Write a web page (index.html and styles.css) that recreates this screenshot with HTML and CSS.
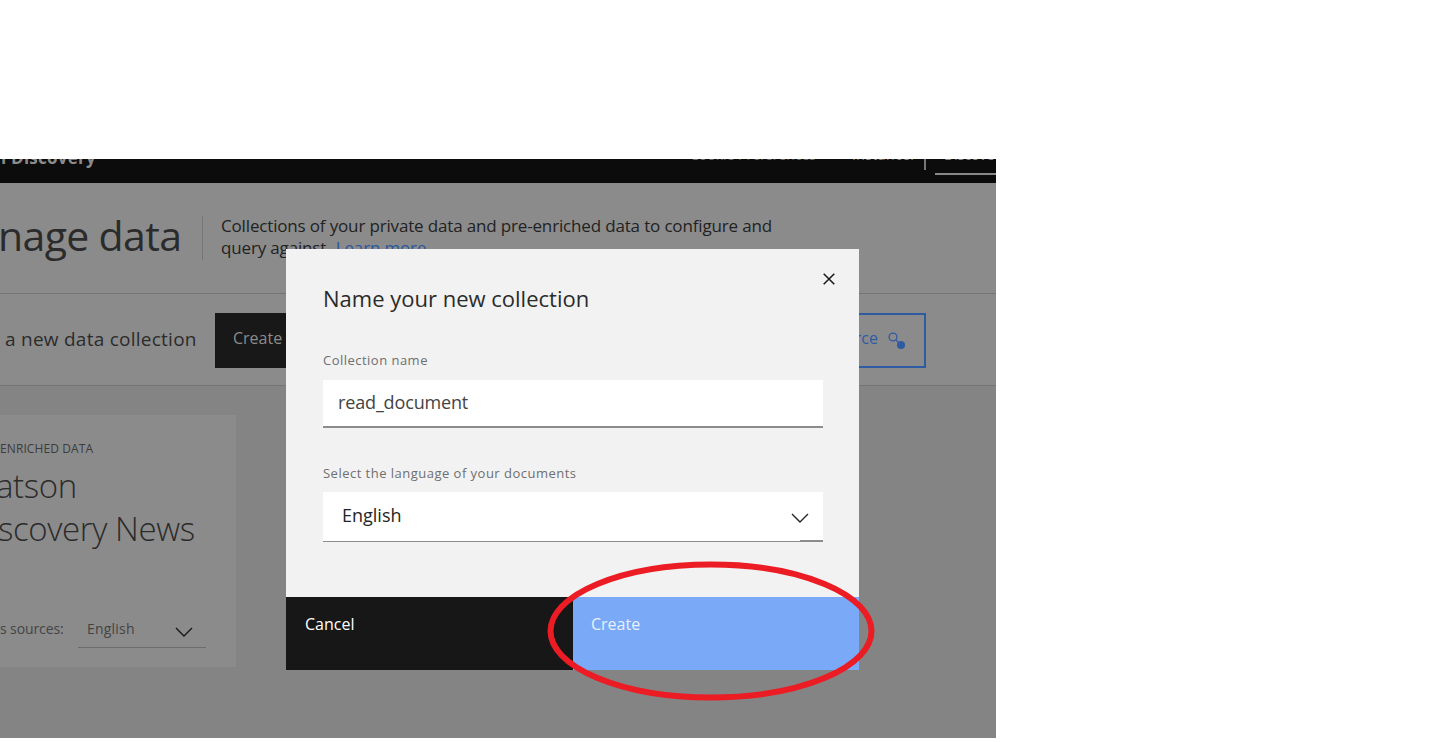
FILE: index.html
```
<!DOCTYPE html>
<html lang="en">
<head>
<meta charset="utf-8">
<title>Discovery - Manage data</title>
<link rel="stylesheet" href="styles.css">
</head>
<body>
<main class="screen">
  <header class="topbar">
    <span class="brand">n Discovery</span>
    <nav class="topnav">
      <span class="nav-cookie">Cookie Preferences</span>
      <span class="nav-instance">Instance:</span>
      <span class="nav-current">Discove</span>
    </nav>
  </header>
  <section class="hero">
    <h1 class="hero-title">nage data</h1>
    <p class="hero-text"><span class="hero-line">Collections of your private data and pre-enriched data to configure and</span><br><span class="hero-query">query against.</span> <a class="link">Learn more.</a></p>
  </section>
  <section class="actions">
    <span class="actions-label">a new data collection</span>
    <span class="btn-dark">Create</span>
    <span class="btn-outline"><span>rce</span>
      <svg class="source-icon" viewBox="0 0 18 18"><circle cx="5" cy="5" r="3.9" fill="none" stroke="currentColor" stroke-width="1.3"/><path d="M8 8l3 3" stroke="currentColor" stroke-width="1.3"/><circle cx="13" cy="13" r="4" fill="currentColor"/></svg>
    </span>
  </section>
  <section class="content">
    <article class="card">
      <p class="card-kicker">ENRICHED DATA</p>
      <h2 class="card-title"><span class="title-a">atson</span><br><span class="title-b">scovery News</span></h2>
      <div class="card-foot">
        <span class="foot-label">s sources:</span>
        <span class="mini-select"><span>English</span>
          <svg class="chevron" viewBox="0 0 18 10"><path d="M1 1l8 8 8-8" fill="none" stroke="currentColor" stroke-width="1.4"/></svg>
        </span>
      </div>
    </article>
  </section>

  <div class="modal">
    <div class="modal-body">
      <svg class="close" viewBox="0 0 12 12"><path d="M.7.7l10.6 10.6M11.3.7L.7 11.3" stroke="currentColor" stroke-width="1.5"/></svg>
      <h3 class="modal-title">Name your new collection</h3>
      <label class="label label-name">Collection name</label>
      <div class="field field-name">read_document</div>
      <label class="label label-lang">Select the language of your documents</label>
      <div class="field field-lang"><span>English</span>
        <svg class="chevron" viewBox="0 0 18 10"><path d="M1 1l8 8 8-8" fill="none" stroke="currentColor" stroke-width="1.4"/></svg>
      </div>
    </div>
    <div class="modal-actions">
      <span class="cancel">Cancel</span>
      <span class="create">Create</span>
    </div>
  </div>
  <svg class="marker" viewBox="0 0 328 140"><ellipse cx="164" cy="70" rx="160.5" ry="66.5" fill="none" stroke="#ec1c24" stroke-width="6"/></svg>
</main>
</body>
</html>
```

FILE: styles.css
```
* { box-sizing: border-box; }
body { margin: 0; background: #fff; font-family: "Open Sans", "Noto Sans", sans-serif; color: #2b2b2b; }
h1, h2, h3, p { margin: 0; font-weight: 400; }
svg { display: block; flex: none; }
span, a, label { white-space: nowrap; }
.screen { position: relative; width: 996px; height: 579px; margin-top: 159px; overflow: hidden; background: #848484; }

.topbar { display: flex; justify-content: space-between; height: 24px; background: #0c0c0c; color: #8b8b8b; overflow: hidden; }
.brand { margin: -14px 0 0 -5px; font-size: 17px; font-weight: 700; line-height: 26px; letter-spacing: .25px; }
.topnav { display: flex; font-size: 14px; line-height: 20px; }
.nav-cookie { margin-top: -14px; width: 162px; color: #6e6e6e; }
.nav-instance { width: 74px; height: 25px; margin-top: -14px; border-right: 2px solid #777; letter-spacing: .4px; }
.nav-current { width: 61px; height: 30px; margin: -14px 0 0 9px; padding-left: 9px; border-bottom: 2px solid #888; overflow: hidden; }

.hero { display: flex; height: 111px; background: #8b8b8b; border-bottom: 1px solid #757575; }
.hero-title { width: 203px; height: 44px; margin: 33px 0 0 0; border-right: 1px solid #757575; font-size: 41px; line-height: 38px; letter-spacing: -.65px; text-indent: -2px; white-space: nowrap; }
.hero-text { margin: 32px 0 0 18px; font-size: 17px; line-height: 22px; letter-spacing: -.16px; color: #222; white-space: nowrap; }
.link { margin-left: 1px; color: #2b569c; }

.actions { display: flex; align-items: flex-start; height: 92px; padding-top: 19px; background: #8b8b8b; border-bottom: 1px solid #757575; }
.actions-label { width: 210px; padding-left: 5px; font-size: 19px; line-height: 52px; letter-spacing: .25px; }
.btn-dark { width: 500px; height: 55px; margin-left: 5px; padding-left: 18px; background: #181818; color: #8b8b8b; font-size: 16px; line-height: 51px; }
.btn-outline { display: flex; justify-content: flex-end; width: 201px; height: 55px; margin-left: 10px; padding-right: 18px; border: 2px solid #2f5ba3; color: #2f5ba3; font-size: 16px; line-height: 47px; }
.source-icon { width: 18px; height: 18px; margin: 17px 0 0 10px; }

.content { padding-top: 29px; }
.card { width: 236px; height: 252px; padding-top: 24px; background: #8b8b8b; }
.card-kicker { font-size: 12px; line-height: 20px; letter-spacing: .1px; color: #3c3c3c; }
.card-title { margin: 5px 0 0 -2px; font-size: 33px; font-weight: 300; line-height: 43px; letter-spacing: -.4px; white-space: nowrap; }
.title-a { margin-left: -2px; }
.card-foot { display: flex; height: 36px; margin-top: 61px; font-size: 14px; line-height: 36px; color: #444; }
.foot-label { width: 78px; letter-spacing: -.1px; }
.mini-select { display: flex; justify-content: space-between; width: 128px; height: 37px; padding: 0 13px 0 9px; border-bottom: 1px solid #6c6c6c; letter-spacing: .2px; }
.mini-select .chevron { margin-top: 16px; color: #181818; }
.chevron { width: 18px; height: 10px; }

.modal { position: absolute; left: 286px; top: 90px; width: 573px; height: 421px; }
.modal-body { position: relative; display: flex; flex-direction: column; height: 348px; padding: 34px 36px 0 37px; background: #f2f2f2; }
.close { position: absolute; right: 24px; top: 24px; width: 12px; height: 12px; color: #171717; }
.modal-title { font-size: 22px; line-height: 30px; white-space: nowrap; }
.label { margin-top: 37px; font-size: 13px; line-height: 20px; letter-spacing: .48px; color: #6f6f6f; }
.field { width: 500px; background: #fff; font-size: 18px; }
.field-name { height: 48px; margin-top: 10px; padding-left: 15px; border-bottom: 2px solid #8c8c8c; line-height: 44px; letter-spacing: -.15px; color: #444; }
.label-lang { margin-top: 35px; }
.field-lang { display: flex; justify-content: space-between; height: 50px; margin-top: 9px; padding: 0 14px 0 19px; border-bottom: 1px solid #8c8c8c; line-height: 46px; color: #252525; background: linear-gradient(#8c8c8c, #8c8c8c) right bottom / 23px 1px no-repeat, #fff; }
.field-lang .chevron { margin-top: 21px; }
.modal-actions { display: flex; height: 73px; color: #fff; font-size: 16px; line-height: 54px; }
.cancel, .create { width: 287px; padding-left: 19px; background: #171717; }
.create { width: 286px; padding-left: 18px; background: #79a9f7; color: #e8f0fe; }
.marker { position: absolute; left: 547px; top: 402px; width: 328px; height: 140px; }
```
